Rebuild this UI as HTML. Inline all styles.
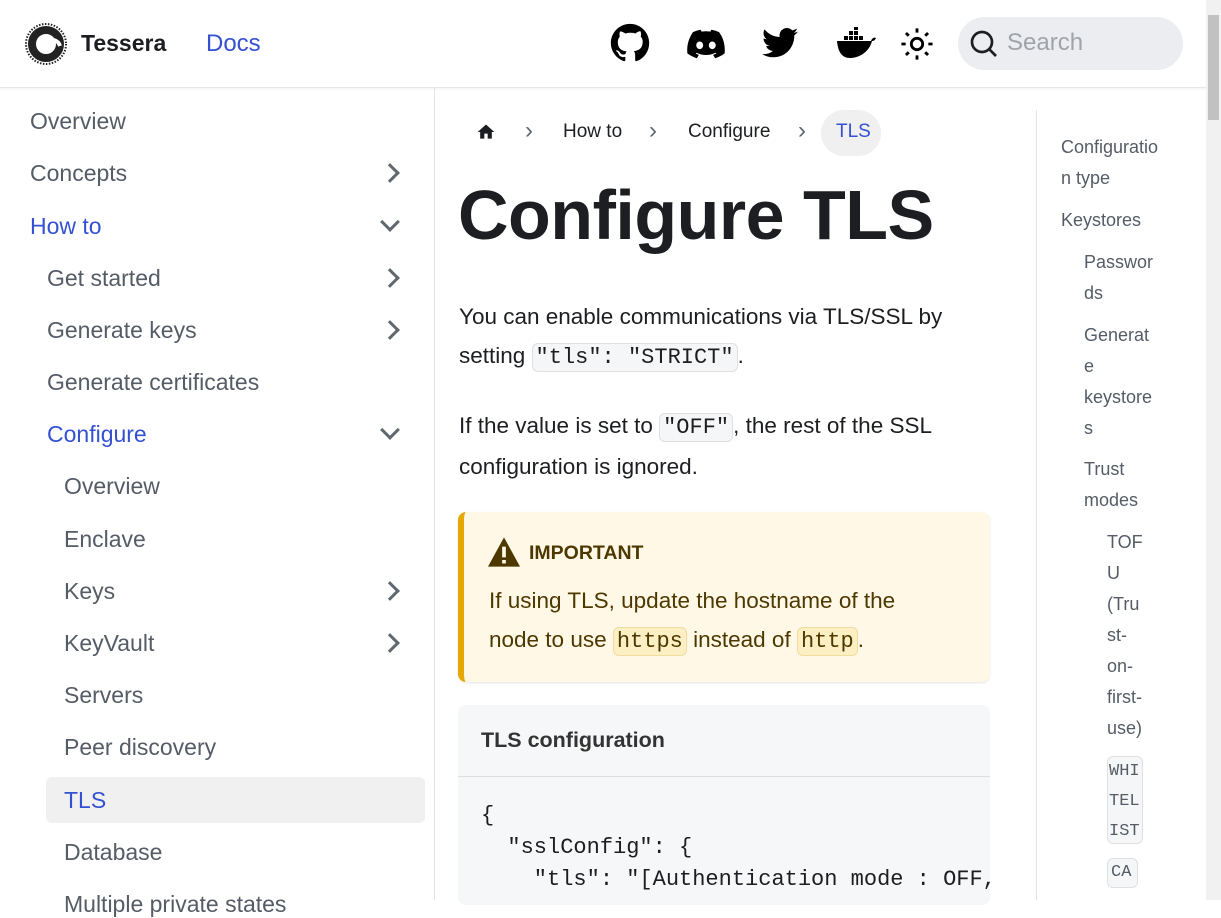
<!DOCTYPE html>
<html><head><meta charset="utf-8"><style>
*{box-sizing:border-box;margin:0;padding:0}
body{width:1221px;height:900px;overflow:hidden;background:#fff;font-family:"Liberation Sans","DejaVu Sans",sans-serif;color:#1c1e21;position:relative}
.a{position:absolute;white-space:nowrap}
.nav{left:0;top:0;width:1206px;height:88px;border-bottom:1px solid #e8e8e8;box-shadow:0 1px 2px rgba(0,0,0,.06)}
.side{left:0;top:88px;width:435px;height:812px;border-right:1px solid #e3e3e3}
.si{font-size:23px;color:#555c66}
.blue{color:#3451d1}
.chev{position:absolute;left:383px;width:14px;height:14px;border-right:3px solid #606770;border-bottom:3px solid #606770}
code{font-family:"Liberation Mono",monospace;background:#f5f6f7;border:1px solid #e0e0e0;border-radius:6px;padding:1px 3px;font-size:22px}
.p{font-size:22.5px;line-height:39px;left:459px}
.toc{font-size:18px;color:#555c66;line-height:31px}
.sb{left:1206px;top:0;width:15px;height:900px;background:#f1f1f1}
.bc{font-size:24px;color:#606770}
</style></head><body>
<div class="a nav"></div>
<svg class="a" style="left:24px;top:22px" width="44" height="44" viewBox="0 0 44 44"><circle cx="22" cy="22" r="20" fill="none" stroke="#222" stroke-width="2" stroke-dasharray="1.5 1.5"/><circle cx="22" cy="22" r="14" fill="none" stroke="#222" stroke-width="8"/><path d="M30 18 A9 9 0 0 1 36 24" stroke="#fff" stroke-width="4" fill="none"/></svg>
<div class="a" style="left:81px;top:30px;font-size:23px;font-weight:bold;color:#1c1e21">Tessera</div>
<div class="a blue" style="left:206px;top:30px;font-size:24px">Docs</div>
<svg class="a" style="left:610px;top:23px" width="40" height="40" viewBox="0 0 24 24"><path fill="#000" d="M12 .5C5.7.5.5 5.7.5 12c0 5 3.3 9.300 7.900 10.900.6.1.8-.3.8-.6v-2c-3.2.7-3.900-1.500-3.900-1.500-.5-1.300-1.300-1.700-1.300-1.700-1-.7.1-.7.1-.7 1.200.1 1.800 1.200 1.800 1.200 1 1.800 2.700 1.300 3.400 1 .1-.8.4-1.300.7-1.600-2.600-.3-5.300-1.300-5.300-5.700 0-1.300.5-2.300 1.200-3.100-.1-.3-.5-1.500.1-3.100 0 0 1-.3 3.300 1.200a11 11 0 0 1 6 0C17.3 4.700 18.3 5 18.3 5c.6 1.600.2 2.800.1 3.100.8.8 1.200 1.800 1.200 3.100 0 4.400-2.700 5.400-5.300 5.700.4.4.8 1.100.8 2.200v3.200c0 .3.2.7.8.6A11.5 11.5 0 0 0 23.5 12C23.5 5.700 18.3.5 12 .5z"/></svg>
<svg class="a" style="left:687px;top:29px" width="38" height="30" viewBox="0 0 32 24"><path fill="#000" d="M27 2A26 26 0 0 0 20.5 0l-.8 1.600a24 24 0 0 0-7.400 0L11.5 0A26 26 0 0 0 5 2C.9 8.100-.2 14 .3 19.900A26 26 0 0 0 8.300 24l1.700-2.800a17 17 0 0 1-2.700-1.300l.7-.5a18.600 18.600 0 0 0 16 0l.7.5a17 17 0 0 1-2.700 1.300l1.700 2.800a26 26 0 0 0 8-4.100C32.300 13 30.700 7.100 27 2zM10.700 16.300c-1.600 0-2.900-1.400-2.900-3.200s1.300-3.200 2.900-3.200 2.900 1.500 2.900 3.200-1.300 3.200-2.900 3.200zm10.600 0c-1.600 0-2.900-1.400-2.900-3.200s1.300-3.200 2.900-3.200 2.900 1.500 2.900 3.200-1.300 3.200-2.900 3.200z"/></svg>
<svg class="a" style="left:762px;top:27px" width="36" height="32" viewBox="0 0 24 20"><path fill="#000" d="M24 2.400a10 10 0 0 1-2.800.8A5 5 0 0 0 23.300.4a10 10 0 0 1-3.100 1.200A4.900 4.900 0 0 0 11.800 6 14 14 0 0 1 1.700.9a4.900 4.900 0 0 0 1.500 6.600A4.900 4.900 0 0 1 1 6.900a4.900 4.900 0 0 0 3.900 4.900 5 5 0 0 1-2.200.1 4.900 4.900 0 0 0 4.600 3.400A9.900 9.900 0 0 1 0 17.300 14 14 0 0 0 7.500 19.500c9.100 0 14-7.500 14-14v-.6A10 10 0 0 0 24 2.400z"/></svg>
<svg class="a" style="left:835px;top:27px" width="42" height="32" viewBox="0 0 42 32"><path fill="#000" d="M2 14h34c1-3 3-4 5-3-1 2-2 3-4 3-3 12-14 17-22 17C7 31 3 25 2 14z"/><g fill="#000"><rect x="9" y="9" width="4" height="4"/><rect x="14" y="9" width="4" height="4"/><rect x="19" y="9" width="4" height="4"/><rect x="24" y="9" width="4" height="4"/><rect x="14" y="4" width="4" height="4"/><rect x="19" y="4" width="4" height="4"/><rect x="19" y="-1" width="4" height="4"/></g></svg>
<svg class="a" style="left:900px;top:27px" width="34" height="34" viewBox="0 0 24 24" fill="none" stroke="#000" stroke-width="2"><circle cx="12" cy="12" r="4"/><path d="M12 1v3M12 20v3M1 12h3M20 12h3M4.200 4.200l2 2M17.800 17.800l2 2M4.200 19.800l2-2M17.800 6.200l2-2"/></svg>
<div class="a" style="left:958px;top:17px;width:225px;height:53px;border-radius:27px;background:#ebedf0"></div>
<svg class="a" style="left:968px;top:28px" width="32" height="32" viewBox="0 0 24 24" fill="none" stroke="#1c1e21" stroke-width="2"><circle cx="10.500" cy="10.500" r="7.500"/><path d="M16 16l5 5"/></svg>
<div class="a" style="left:1007px;top:29px;font-size:24px;color:#a0a3a8">Search</div>

<div class="a side"></div>
<div class="a si" style="left:30px;top:108px">Overview</div>
<div class="a si" style="left:30px;top:160px">Concepts</div><div class="chev" style="top:166px;transform:rotate(-45deg)"></div>
<div class="a si blue" style="left:30px;top:213px">How to</div><div class="chev" style="top:215px;transform:rotate(45deg)"></div>
<div class="a si" style="left:47px;top:265px">Get started</div><div class="chev" style="top:271px;transform:rotate(-45deg)"></div>
<div class="a si" style="left:47px;top:317px">Generate keys</div><div class="chev" style="top:323px;transform:rotate(-45deg)"></div>
<div class="a si" style="left:47px;top:369px">Generate certificates</div>
<div class="a si blue" style="left:47px;top:421px">Configure</div><div class="chev" style="top:423px;transform:rotate(45deg)"></div>
<div class="a si" style="left:64px;top:473px">Overview</div>
<div class="a si" style="left:64px;top:526px">Enclave</div>
<div class="a si" style="left:64px;top:578px">Keys</div><div class="chev" style="top:584px;transform:rotate(-45deg)"></div>
<div class="a si" style="left:64px;top:630px">KeyVault</div><div class="chev" style="top:636px;transform:rotate(-45deg)"></div>
<div class="a si" style="left:64px;top:682px">Servers</div>
<div class="a si" style="left:64px;top:734px">Peer discovery</div>
<div class="a" style="left:46px;top:777px;width:379px;height:46px;background:#f0f0f0;border-radius:6px"></div>
<div class="a si blue" style="left:64px;top:787px">TLS</div>
<div class="a si" style="left:64px;top:839px">Database</div>
<div class="a si" style="left:64px;top:891px">Multiple private states</div>

<svg class="a" style="left:475px;top:122px" width="22" height="20" viewBox="0 0 24 24"><path fill="#1c1e21" d="M10 20v-6h4v6h5v-8h3L12 3 2 12h3v8z"/></svg>
<div class="a bc" style="left:525px;top:117px">›</div>
<div class="a" style="left:563px;top:121px;font-size:19px">How to</div>
<div class="a bc" style="left:649px;top:117px">›</div>
<div class="a" style="left:688px;top:121px;font-size:19px">Configure</div>
<div class="a bc" style="left:798px;top:117px">›</div>
<div class="a" style="left:821px;top:110px;width:60px;height:46px;border-radius:23px;background:#f0f0f0"></div>
<div class="a blue" style="left:836px;top:121px;font-size:19px">TLS</div>
<div class="a" style="left:458px;top:175px;font-size:70px;font-weight:bold;letter-spacing:-0.5px">Configure TLS</div>
<div class="a p" style="top:297px">You can enable communications via TLS/SSL by<br>setting <code>"tls": "STRICT"</code>.</div>
<div class="a p" style="top:406px">If the value is set to <code>"OFF"</code>, the rest of the SSL<br>configuration is ignored.</div>
<div class="a" style="left:458px;top:512px;width:532px;height:170px;background:#fff8e6;border-left:6px solid #e6a700;border-radius:8px;box-shadow:0 1px 2px rgba(0,0,0,.1)"></div>
<svg class="a" style="left:488px;top:537px" width="32" height="30" viewBox="0 0 24 22"><path fill="#4d3800" d="M12 0 0 22h24z"/><rect x="10.600" y="7" width="2.800" height="8" fill="#fff8e6"/><rect x="10.600" y="17" width="2.800" height="2.600" fill="#fff8e6"/></svg>
<div class="a" style="left:529px;top:542px;font-size:19.5px;font-weight:bold;color:#4d3800">IMPORTANT</div>
<div class="a" style="left:489px;top:581px;font-size:22.5px;line-height:39px;color:#4d3800">If using TLS, update the hostname of the<br>node to use <code style="background:#fdefc4;border-color:#f0dca0">https</code> instead of <code style="background:#fdefc4;border-color:#f0dca0">http</code>.</div>
<div class="a" style="left:458px;top:705px;width:532px;height:200px;background:#f6f7f8;border-radius:8px;overflow:hidden">
<div class="a" style="left:23px;top:95px;font-family:'Liberation Mono',monospace;font-size:22px;line-height:32px;white-space:pre;color:#1c1e21">{
  "sslConfig": {
    "tls": "[Authentication mode : OFF,</div></div>
<div class="a" style="left:458px;top:776px;width:532px;height:1px;background:#dadde1"></div>
<div class="a" style="left:481px;top:728px;font-size:21.5px;font-weight:bold;color:#333">TLS configuration</div>

<div class="a" style="left:1036px;top:110px;width:1px;height:790px;background:#e3e3e3"></div>
<div class="a toc" style="left:1061px;top:132px">Configuratio<br>n type</div>
<div class="a toc" style="left:1061px;top:205px">Keystores</div>
<div class="a toc" style="left:1084px;top:247px">Passwor<br>ds</div>
<div class="a toc" style="left:1084px;top:320px">Generat<br>e<br>keystore<br>s</div>
<div class="a toc" style="left:1084px;top:454px">Trust<br>modes</div>
<div class="a toc" style="left:1107px;top:527px">TOF<br>U<br>(Tru<br>st-<br>on-<br>first-<br>use)</div>
<div class="a" style="left:1107px;top:756px;width:36px;height:88px;background:#f5f6f7;border:1px solid #e0e0e0;border-radius:6px;font-family:'Liberation Mono',monospace;font-size:17px;line-height:30px;color:#555c66;padding-left:1px">WHI<br>TEL<br>IST</div>
<div class="a" style="left:1107px;top:858px;width:31px;height:30px;background:#f5f6f7;border:1px solid #e0e0e0;border-radius:6px;font-family:'Liberation Mono',monospace;font-size:17px;line-height:28px;color:#555c66;padding-left:3px">CA</div>
<div class="a sb"></div>
<div class="a" style="left:1208px;top:15px;width:11px;height:105px;background:#c1c1c1"></div>
</body></html>
